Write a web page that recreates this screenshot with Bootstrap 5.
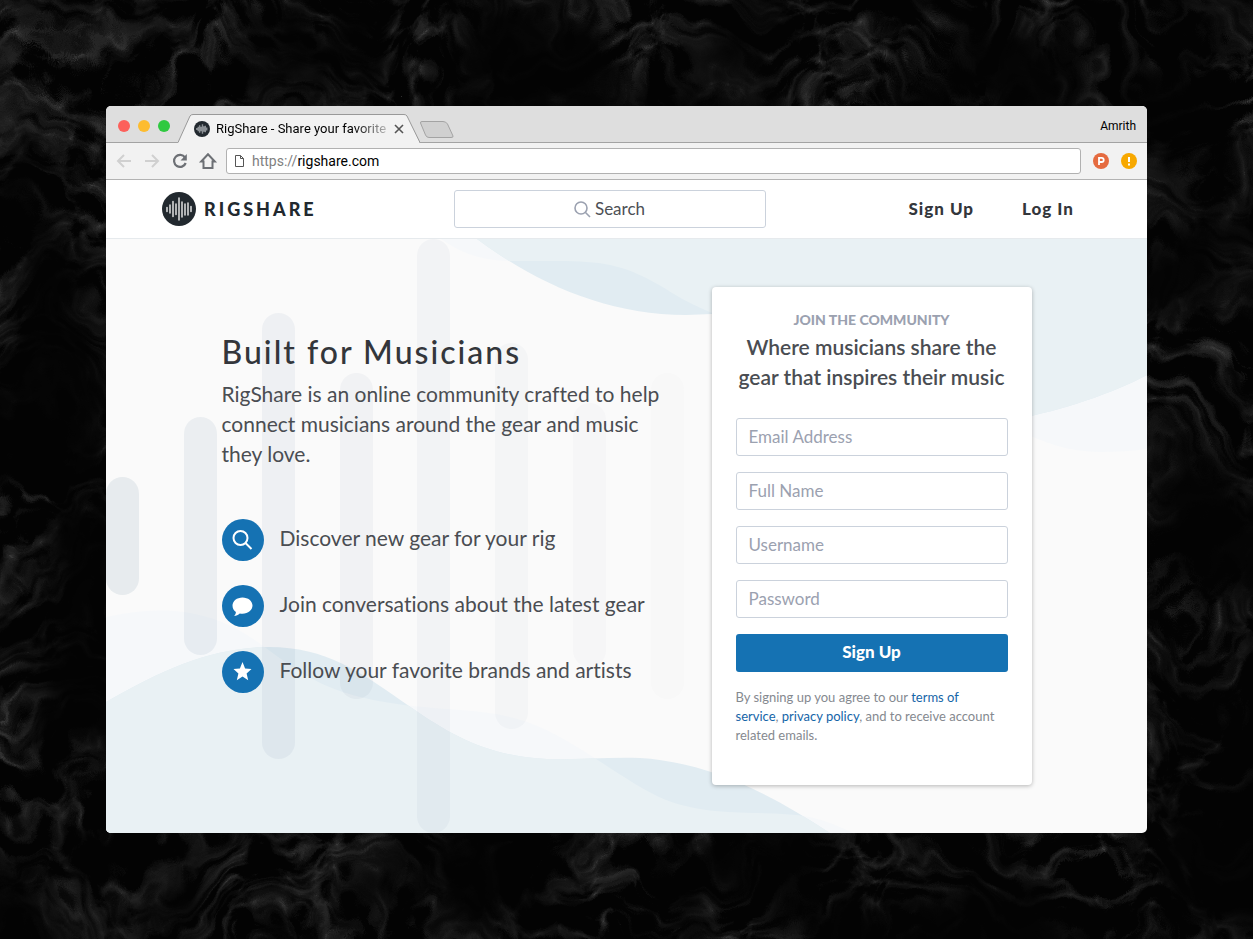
<!DOCTYPE html>
<html lang="en">
<head>
<meta charset="utf-8">
<meta name="viewport" content="width=device-width, initial-scale=1">
<title>RigShare - Share your favorite gear</title>
<link href="https://cdn.jsdelivr.net/npm/bootstrap@5.3.0/dist/css/bootstrap.min.css" rel="stylesheet">
<script src="https://cdn.jsdelivr.net/npm/bootstrap@5.3.0/dist/js/bootstrap.bundle.min.js"></script>
<style>
  :root { --brand: #1572b3; --ink: #22292f; --field: #cbd2dc; --mute: #9ba1b0; }
  body { background: #070707; font-family: Lato, "Liberation Sans", sans-serif; font-variant-ligatures: none; color: #4a4d52; }
  .desktop { padding: clamp(12px, 8.46vw, 106px); min-height: 100vh; }
  .wallpaper { inset: 0; z-index: -1; }
  .window { border-radius: 5px; background: #fafafa; }

  /* browser chrome */
  .chrome { font-family: Roboto, "Liberation Sans", sans-serif; color: #000; }
  .tabstrip { height: 37px; background: #dedede; border-bottom: 1px solid #a3a3a3; padding: 0 11px 0 12px; }
  .light { width: 12px; height: 12px; border-radius: 50%; }
  .tab-item { width: 242px; height: 29px; margin-bottom: -1px; padding: 0 16px; gap: 6px; font-size: 13px; }
  .tab-title { width: 172px; -webkit-mask-image: linear-gradient(90deg, #000 80%, rgba(0,0,0,.2)); mask-image: linear-gradient(90deg, #000 80%, rgba(0,0,0,.2)); }
  .toolbar { height: 37px; background: #f2f2f2; border-bottom: 1px solid #b3b3b3; padding: 0 10px 0 8px; }
  .bare { border: 0; background: none; padding: 0; line-height: 0; }
  .address { height: 26px; border: 1px solid #b1b1b1; border-radius: 3px; font-size: 14px; padding: 0 8px; }
  .address input { font-size: 14px; color: #000; line-height: 24px; outline: 0; }
  .scheme { color: #808080; }
  .profile { font-size: 12px; }

  /* site header */
  .site-nav { display: grid; grid-template-columns: 292fr 312fr 332fr; height: 59px; padding: 0 49px 0 56px; border-bottom: 1px solid #e6eaed; }
  .wordmark { font-size: 18px; font-weight: 900; letter-spacing: 3px; color: var(--ink); }
  .nav-item-link { font-size: 17px; font-weight: 900; letter-spacing: 1px; color: #33363b; text-decoration: none; }
  .form-control { height: 38px; padding: 5px 12px 6px; border-color: var(--field); border-radius: 3px; font-size: 17px; }
  .form-control::placeholder { color: var(--mute); }
  .search-input { text-align: center; padding-left: 32px; }
  .search-input::placeholder { color: #4d5055; }
  .search-icon { left: calc(50% - 36px); top: 11px; pointer-events: none; }

  /* hero */
  .hero { padding: 48px 16px; }
  .hero-art { inset: 0; }
  .hero-inner { max-width: 810px; gap: 40px; }
  .lead-in { padding-top: 46px; }
  .headline { font-size: 32px; line-height: 38px; letter-spacing: 2px; font-weight: 500; color: #33363b; }
  .intro { font-size: 21px; line-height: 30px; margin-bottom: 50px; }
  .feature { font-size: 21px; line-height: 30px; }
  .bubble { width: 42px; height: 42px; border-radius: 50%; background: var(--brand); }
  .signup { width: 320px; max-width: 100%; min-height: 498px; padding: 24px; border-radius: 4px; box-shadow: 0 1px 4px rgba(0,0,0,.28); }
  .eyebrow { font-size: 14px; line-height: 17px; font-weight: 900; color: var(--mute); }
  .pitch { font-size: 21px; line-height: 30px; font-weight: 600; color: #4a4d52; margin-bottom: 26px; }
  .btn-brand { --bs-btn-bg: var(--brand); --bs-btn-color: #fff; --bs-btn-hover-bg: #105f97; --bs-btn-hover-color: #fff; height: 38px; border-radius: 3px; font-size: 17px; font-weight: 900; }
  .legal { font-size: 13px; line-height: 19px; color: #85898f; }
  .legal a { color: #1565a8; text-decoration: none; }
</style>
</head>
<body>
<svg class="wallpaper position-fixed w-100 h-100" aria-hidden="true">
  <defs>
    <filter id="sea" x="-20%" y="-20%" width="140%" height="140%" color-interpolation-filters="sRGB">
      <feTurbulence type="fractalNoise" baseFrequency="0.007 0.006" numOctaves="4" seed="4" result="swell"/>
      <feTurbulence type="turbulence" baseFrequency="0.014 0.022" numOctaves="5" seed="21"/>
      <feColorMatrix values="1 0 0 0 0  0 1 0 0 0  0 0 1 0 0  0 0 0 0 1" result="crest"/>
      <feDisplacementMap in="crest" in2="swell" scale="220" xChannelSelector="R" yChannelSelector="G" result="bent"/>
      <feColorMatrix in="bent" values="-.7 -.7 0 0 .52  -.7 -.7 0 0 .52  -.7 -.7 0 0 .52  0 0 0 0 1" result="ridge"/>
      <feColorMatrix in="swell" values="0 0 3 0 -.95  0 0 3 0 -.95  0 0 3 0 -.95  0 0 0 0 1" result="shade"/>
      <feComposite in="ridge" in2="shade" operator="arithmetic" k1=".4" k2=".03"/>
    </filter>
  </defs>
  <rect width="100%" height="100%" filter="url(#sea)"/>
</svg>

<div class="desktop">
  <div class="window overflow-hidden">
    <div class="chrome">
      <div class="tabstrip d-flex align-items-end">
        <div class="d-flex gap-2 align-self-center pt-1">
          <span class="light" style="background:#fc605b"></span>
          <span class="light" style="background:#fdbc2f"></span>
          <span class="light" style="background:#2fc940"></span>
        </div>
        <div class="tab-item position-relative d-flex align-items-center ms-2">
          <svg class="position-absolute start-0 top-0 w-100 h-100" viewBox="0 0 242 29" preserveAspectRatio="none" aria-hidden="true"><path d="M0 28.500L12 2Q13 .5 15 .5H226Q228 .5 229 2L241.500 28.500V29H0Z" fill="#f2f2f2"/><path d="M0 28.500L12 2Q13 .5 15 .5H226Q228 .5 229 2L242 28.500" fill="none" stroke="#999"/></svg>
          <svg class="position-relative flex-shrink-0" width="16" height="16" viewBox="0 0 34 34" aria-hidden="true"><circle cx="17" cy="17" r="17" fill="#22292f"/><path d="M6 15v4M9 12v10M12 9v16M15 12v10M18 7v20M21 11v12M24 10v14M27 14v6" stroke="#8b9095" stroke-width="3"/></svg>
          <span class="tab-title position-relative text-nowrap flex-shrink-0">RigShare - Share your favorite</span>
          <button class="bare position-relative" aria-label="Close tab"><svg width="10" height="10" viewBox="0 0 10 10"><path d="M1 1l8 8M9 1l-8 8" stroke="#555" stroke-width="1.600"/></svg></button>
        </div>
        <button class="bare align-self-center mt-2 pt-1 ms-n2" aria-label="New tab"><svg width="34" height="18" viewBox="0 0 34 18"><path d="M2 .5H23Q26 .5 27.500 3L33 15Q33.500 16.500 31 16.500H9Q6.500 16.500 5.500 14L.5 2Q.2 .5 2 .5Z" fill="#d0d0d0" stroke="#a3a3a3"/></svg></button>
        <span class="profile ms-auto align-self-center pt-1">Amrith</span>
      </div>
      <div class="toolbar d-flex align-items-center">
        <div class="d-flex gap-2 me-2">
          <button class="bare" aria-label="Back"><svg width="20" height="20" viewBox="0 0 20 20" fill="none" stroke="#d0d0d0" stroke-width="2"><path d="M17 10H4M10 4L4 10l6 6"/></svg></button>
          <button class="bare" aria-label="Forward"><svg width="20" height="20" viewBox="0 0 20 20" fill="none" stroke="#d0d0d0" stroke-width="2"><path d="M3 10h13M10 4l6 6-6 6"/></svg></button>
          <button class="bare" aria-label="Reload"><svg width="20" height="20" viewBox="0 0 20 20"><path d="M15 6.500A6 6 0 1 0 15.700 12" fill="none" stroke="#6d7075" stroke-width="2.200"/><path d="M16.800 3V9.500H10.500Z" fill="#6d7075"/></svg></button>
          <button class="bare" aria-label="Home"><svg width="20" height="20" viewBox="0 0 20 20" fill="none" stroke="#6d7075" stroke-width="2"><path d="M10 3.200L3.200 10.500H5.500V17H14.500V10.500H16.800Z"/></svg></button>
        </div>
        <label class="address d-flex align-items-center bg-white flex-grow-1">
          <svg class="me-2" width="9" height="12" viewBox="0 0 9 12" fill="none" stroke="#555" aria-hidden="true"><path d="M.5 .5H5.500L8.500 3.500V11.500H.5ZM5.500 .5V3.500H8.500"/></svg>
          <span class="scheme">https://</span><input class="border-0 p-0 flex-grow-1 bg-transparent" type="text" value="rigshare.com" aria-label="Address">
        </label>
        <div class="d-flex ms-2 ps-1 gap-2">
          <button class="bare me-1" aria-label="Product Hunt"><svg width="16" height="16" viewBox="0 0 16 16"><circle cx="8" cy="8" r="8" fill="#e56b40"/><path d="M6 12V4.800H8.600a2 2 0 0 1 0 4.200H6" fill="none" stroke="#fff" stroke-width="1.800"/></svg></button>
          <button class="bare" aria-label="Alerts"><svg width="16" height="16" viewBox="0 0 16 16"><circle cx="8" cy="8" r="8" fill="#f7a800"/><path d="M8 4v5M8 10.500v2" stroke="#fff" stroke-width="2"/></svg></button>
        </div>
      </div>
    </div>

    <nav class="site-nav bg-white align-items-center">
      <a href="#" class="d-flex align-items-center gap-2 text-decoration-none">
        <svg width="34" height="34" viewBox="0 0 34 34" aria-hidden="true"><circle cx="17" cy="17" r="17" fill="#22292f"/><path d="M5 15.500v4M8 13v8M11 9.500v15M14 12v10.500M17 6v22M20 10v15M23 12v11M26 11v12M29 14.500v5" stroke="#fff" stroke-width="1.300" stroke-linecap="round"/></svg>
        <span class="wordmark">RIGSHARE</span>
      </a>
      <div class="position-relative">
        <svg class="search-icon position-absolute" width="17" height="17" viewBox="0 0 17 17" fill="none" stroke="#9ba1b0" stroke-width="1.600" aria-hidden="true"><circle cx="7" cy="7" r="6"/><path d="M11.500 11.500l4.500 4.500"/></svg>
        <input class="form-control search-input" type="text" placeholder="Search" aria-label="Search">
      </div>
      <div class="d-flex justify-content-end gap-5 pe-4">
        <a class="nav-item-link" href="#">Sign Up</a>
        <a class="nav-item-link" href="#">Log In</a>
      </div>
    </nav>

    <main class="hero position-relative">
      <svg class="hero-art position-absolute w-100 h-100" viewBox="0 0 1041 594" preserveAspectRatio="xMidYMid slice" aria-hidden="true">
        <defs>
          <path id="low" d="M0 378C60 364 110 372 153 404C205 443 230 458 307 467C350 472 385 470 421 483C470 500 520 545 560 561C610 580 660 570 704 578Q725 583 747 594H0Z"/>
          <path id="high" d="M335 0Q365 22 404 22H460C500 23 520 26 560 50C600 78 720 120 800 120C860 150 915 213 994 213Q1020 213 1041 210V0Z"/>
          <clipPath id="clipLow"><use href="#low"/></clipPath>
          <clipPath id="clipHigh"><use href="#high"/></clipPath>
        </defs>
        <g fill="#f6f8fa"><use href="#low"/><use href="#high"/></g>
        <g fill="#e1ecf2">
          <path d="M0 463C60 428 110 408 163 408C220 408 255 433 303 467C350 500 385 517 441 520C470 521 500 518 534 519C600 523 660 552 724 594H0Z"/>
          <path d="M371 0C430 44 500 76 580 76L606 75C700 80 780 182 880 184C930 180 1000 158 1041 136V0Z"/>
        </g>
        <g fill="#e9f1f4">
          <path d="M0 463C60 428 110 408 163 408C220 408 255 433 303 467C350 500 385 517 441 520C470 521 500 518 534 519C600 523 660 552 724 594H0Z" clip-path="url(#clipLow)"/>
          <path d="M371 0C430 44 500 76 580 76L606 75C700 80 780 182 880 184C930 180 1000 158 1041 136V0Z" clip-path="url(#clipHigh)"/>
        </g>
        <g fill="#465f8c">
          <rect x="0" y="238" width="33" height="118" rx="16.500" fill="#466e8c" opacity=".1"/>
          <rect x="78" y="178" width="33" height="238" rx="16.500" fill="#46688c" opacity=".08"/>
          <rect x="156" y="74" width="33" height="446" rx="16.500" opacity=".064"/>
          <rect x="234" y="134" width="33" height="326" rx="16.500" opacity=".052"/>
          <rect x="311" y="0" width="33" height="594" rx="16.500" opacity=".043"/>
          <rect x="389" y="104" width="33" height="386" rx="16.500" opacity=".032"/>
          <rect x="467" y="164" width="33" height="264" rx="16.500" opacity=".022"/>
          <rect x="545" y="134" width="33" height="326" rx="16.500" fill="#666" opacity=".01"/>
        </g>
      </svg>
      <div class="hero-inner position-relative mx-auto d-flex flex-wrap flex-lg-nowrap">
        <section class="lead-in flex-grow-1">
          <h1 class="headline mb-2">Built for Musicians</h1>
          <p class="intro">RigShare is an online community crafted to help connect musicians around the gear and music they love.</p>
          <ul class="list-unstyled d-grid gap-4 mb-0">
            <li class="feature d-flex align-items-center gap-3"><span class="bubble flex-shrink-0 d-grid"><svg width="42" height="42" viewBox="0 0 42 42" fill="none" stroke="#fff" stroke-width="2" aria-hidden="true"><circle cx="18.500" cy="19" r="7"/><path d="M23.500 24l6 6"/></svg></span><span class="pb-1">Discover new gear for your rig</span></li>
            <li class="feature d-flex align-items-center gap-3"><span class="bubble flex-shrink-0 d-grid"><svg width="42" height="42" viewBox="0 0 42 42" fill="#fff" aria-hidden="true"><path d="M20.500 12.500c5.600 0 10 3.600 10 8s-4.400 8.200-10 8.200c-1 0-1.900-.1-2.700-.3-1.600 1.600-3.500 2.400-5.800 2.600 1.200-1 1.800-2.300 1.900-4C11.700 25.500 10.500 23.200 10.500 20.500c0-4.400 4.400-8 10-8Z"/></svg></span><span class="pb-1">Join conversations about the latest gear</span></li>
            <li class="feature d-flex align-items-center gap-3"><span class="bubble flex-shrink-0 d-grid"><svg width="42" height="42" viewBox="0 0 42 42" fill="#fff" aria-hidden="true"><path d="M20.500 11l2.600 6.500 6.400.5-4.900 4.400 1.600 6.800-5.700-3.700-5.700 3.700 1.600-6.800L11.500 18l6.400-.5Z"/></svg></span><span class="pb-1">Follow your favorite brands and artists</span></li>
          </ul>
        </section>
        <form class="signup bg-white flex-shrink-0">
          <p class="eyebrow text-center mb-0">JOIN THE COMMUNITY</p>
          <h2 class="pitch text-center mx-n2 mt-1">Where musicians share the gear that inspires their music</h2>
          <div class="d-grid gap-3">
            <input class="form-control" type="email" placeholder="Email Address" aria-label="Email Address">
            <input class="form-control" type="text" placeholder="Full Name" aria-label="Full Name">
            <input class="form-control" type="text" placeholder="Username" aria-label="Username">
            <input class="form-control" type="password" placeholder="Password" aria-label="Password">
            <button class="btn btn-brand border-0 pt-1" type="button">Sign Up</button>
            <p class="legal mb-0 pe-2">By signing up you agree to our <a href="#">terms of service</a>, <a href="#">privacy policy</a>, and to receive account related emails.</p>
          </div>
        </form>
      </div>
    </main>
  </div>
</div>
</body>
</html>
